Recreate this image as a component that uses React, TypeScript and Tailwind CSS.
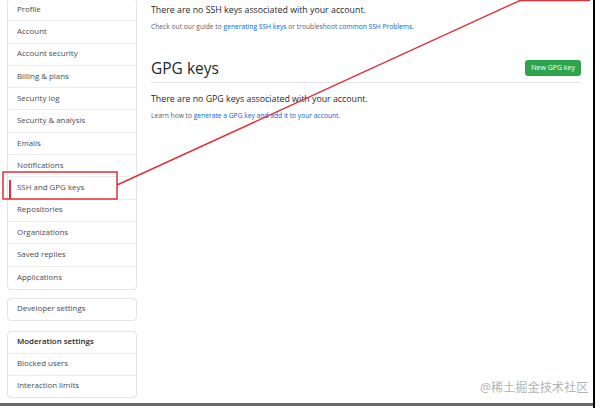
const rows = [
  "Profile",
  "Account",
  "Account security",
  "Billing & plans",
  "Security log",
  "Security & analysis",
  "Emails",
  "Notifications",
  "SSH and GPG keys",
  "Repositories",
  "Organizations",
  "Saved replies",
  "Applications",
];

const font = { fontFamily: '"Open Sans", "Noto Sans CJK SC", sans-serif' };

export default function App() {
  return (
    <div className="relative w-[609px] h-[408px] overflow-hidden bg-white text-[#24292e]" style={font}>
      <div className="flex h-[403px]">
        {/* sidebar */}
        <div className="w-[137px] pl-[7px] shrink-0 flex flex-col">
          <div className="-mt-[2px] border border-[#e1e4e8] rounded-[4px] bg-white">
            {rows.map((r, i) => (
              <div
                key={r}
                className={`h-[22.3px] flex items-center pl-[9px] text-[7.9px] text-[#444d56] relative ${
                  i < rows.length - 1 ? "border-b border-[#eaecef]" : ""
                }`}
              >
                {r === "SSH and GPG keys" && (
                  <span className="absolute left-[1px] top-[3px] bottom-0 w-[1.5px] bg-[#e0303a]" />
                )}
                {r}
              </div>
            ))}
          </div>
          <div className="mt-[8px] h-[23px] border border-[#e1e4e8] rounded-[4px] flex items-center pl-[9px] text-[7.9px] text-[#444d56]">
            Developer settings
          </div>
          <div className="mt-[10px] border border-[#e1e4e8] rounded-[4px]">
            <div className="h-[22px] flex items-center pl-[9px] text-[7.9px] font-semibold text-[#24292e] border-b border-[#eaecef]">
              Moderation settings
            </div>
            <div className="h-[22px] flex items-center pl-[9px] text-[7.9px] text-[#444d56] border-b border-[#eaecef]">
              Blocked users
            </div>
            <div className="h-[21px] flex items-center pl-[9px] text-[7.9px] text-[#444d56]">
              Interaction limits
            </div>
          </div>
        </div>

        {/* main */}
        <div className="ml-[14px] w-[430px] flex flex-col">
          <p className="mt-[3px] text-[8.8px] leading-[14px]">There are no SSH keys associated with your account.</p>
          <p className="mt-[4px] text-[6.7px] leading-[12px] text-[#586069]">
            Check out our guide to <span className="text-[#0366d6]">generating SSH keys</span> or troubleshoot{" "}
            <span className="text-[#0366d6]">common SSH Problems</span>.
          </p>
          <div className="mt-[24px] flex items-end justify-between border-b border-[#e1e4e8] pb-[5px]">
            <h2 className="text-[15.5px] leading-[20px] translate-y-[1px]">GPG keys</h2>
            <div className="mb-[1px] h-[16px] px-[6px] rounded-[3px] bg-[#2ea44f] text-white text-[7px] flex items-center">
              New GPG key
            </div>
          </div>
          <p className="mt-[9px] text-[8.8px] leading-[14px]">There are no GPG keys associated with your account.</p>
          <p className="mt-[4px] text-[6.7px] leading-[12px] text-[#586069]">
            Learn how to <span className="text-[#0366d6]">generate a GPG key and add it to your account</span>.
          </p>
        </div>
      </div>

      {/* bottom frame */}
      <div className="absolute left-0 top-[403px] w-[594px] h-[3px] bg-[#6a6a6a]" />
      <div className="absolute left-[593px] top-0 w-[1.5px] h-[408px] bg-black" />

      {/* annotations */}
      <svg className="absolute inset-0 pointer-events-none" width="609" height="408">
        <rect x="3" y="172" width="114" height="27" fill="none" stroke="#e0303a" strokeWidth="1.5" />
        <line x1="117" y1="185" x2="521" y2="0" stroke="#e0303a" strokeWidth="1.5" />
        <line x1="519" y1="0.5" x2="590" y2="0.5" stroke="#e0303a" strokeWidth="1.5" />
      </svg>

      <div className="absolute left-[480px] top-[379px] text-[12.2px] text-[#b4b4b4]" style={font}>
        @稀土掘金技术社区
      </div>
    </div>
  );
}
